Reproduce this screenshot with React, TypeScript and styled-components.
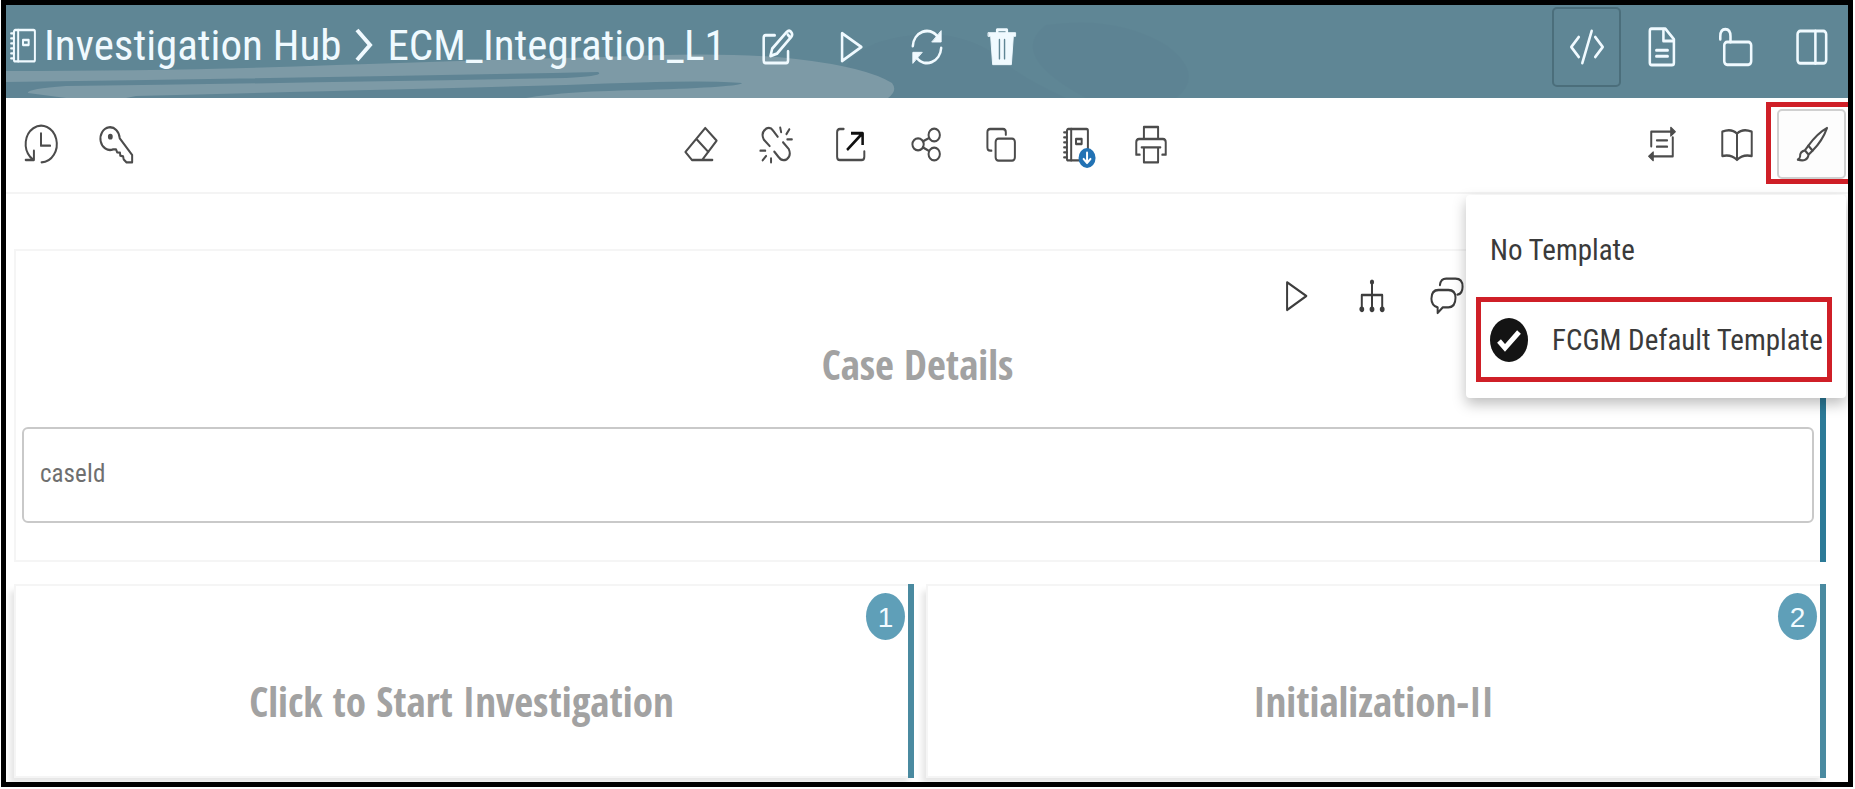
import React from "react";
import styled, { createGlobalStyle, css } from "styled-components";

const text = `"Roboto Condensed", "Open Sans", sans-serif`;
const display = `"Open Sans Condensed", "Open Sans", sans-serif`;

const GlobalStyle = createGlobalStyle`
  *, *::before, *::after { box-sizing: border-box; }
  body { margin: 0; background: #fff; font-family: ${text}; }
`;

const Page = styled.div`
  display: flex;
  min-height: 100vh;
  padding: 0 2px 2px 1px;
`;

const Frame = styled.div`
  display: flex;
  flex: 1;
  flex-direction: column;
  min-width: 0;
  border: 5px solid #000;
  background: #fff;
  overflow: hidden;
`;

const Header = styled.header`
  position: relative;
  display: flex;
  align-items: flex-start;
  justify-content: space-between;
  height: 93px;
  padding: 2px 2px 0 0;
  background: #5f8695;
  color: #f0faff;
  overflow: hidden;
`;

const Backdrop = styled.svg`
  position: absolute;
  left: 0;
  bottom: 0;
`;

const HeaderGroup = styled.div`
  position: relative;
  display: flex;
  align-items: center;
  gap: 6px;
  height: 80px;
`;

const Breadcrumb = styled.nav`
  display: flex;
  align-items: center;
  height: 80px;
  margin-right: 11px;
  padding-bottom: 4px;
  font-size: 43px;
  line-height: 56px;
  white-space: nowrap;
`;

const Crumb = styled.a`
  color: inherit;
  text-decoration: none;
`;

const Icon = styled.svg<{ $bold?: boolean }>`
  display: block;
  flex: none;
  width: 34px;
  height: 40px;
  fill: none;
  overflow: visible;
  stroke: currentColor;
  stroke-width: ${(p) => (p.$bold ? 1.8 : 1.4)};
  stroke-linecap: round;
  stroke-linejoin: round;
`;

const BrandMark = styled.span`
  margin-right: 4px;
`;

const IconButton = styled.button<{ $pressed?: "dark" | "light" }>`
  display: flex;
  align-items: center;
  justify-content: center;
  width: 69px;
  height: 80px;
  padding: 0;
  border: 2px solid transparent;
  border-radius: 5px;
  background: none;
  color: inherit;
  cursor: pointer;
  ${(p) => p.$pressed === "dark" && css`border-color: #4b6e7b;`}
  ${(p) => p.$pressed === "light" && css`height: 70px; border-color: #d0d0d0; background: #fdfdfd;`}
`;

const Toolbar = styled.div`
  position: relative;
  z-index: 1;
  display: grid;
  grid-template-columns: 1fr auto 1fr;
  align-items: center;
  height: 96px;
  padding: 0 2px 2px 0;
  border-bottom: 2px solid #f4f4f4;
  color: #4c4c4c;
`;

const ToolGroup = styled.div<{ $end?: boolean }>`
  display: flex;
  align-items: center;
  gap: 6px;
  justify-self: ${(p) => (p.$end ? "end" : "start")};
`;

const BrushHost = styled.div`
  position: relative;

  &::before {
    content: "";
    position: absolute;
    inset: -7px -2px -5px -11px;
    border: 5px solid #cf1f27;
    border-right: 0;
    pointer-events: none;
  }
`;

const Menu = styled.div`
  position: absolute;
  top: 97px;
  right: 2px;
  width: 380px;
  padding: 22px 14px 16px 10px;
  border-radius: 4px;
  background: #fff;
  box-shadow: 0 6px 14px rgba(0, 0, 0, 0.26);
`;

const MenuItem = styled.button<{ $marked?: boolean }>`
  display: flex;
  align-items: center;
  gap: 24px;
  width: 100%;
  height: ${(p) => (p.$marked ? 85 : 66)}px;
  margin-bottom: ${(p) => (p.$marked ? 0 : 14)}px;
  padding: 0 ${(p) => (p.$marked ? 0 : 14)}px 0 ${(p) => (p.$marked ? 9 : 14)}px;
  border: ${(p) => (p.$marked ? "5px solid #cf1f27" : "0")};
  background: none;
  color: #3a3a3a;
  font-family: ${text};
  font-size: 29px;
  line-height: 36px;
  white-space: nowrap;
  cursor: pointer;
`;

const CheckMark = styled.svg`
  display: block;
  flex: none;
`;

const Workspace = styled.main`
  display: flex;
  flex: 1;
  flex-direction: column;
  gap: 22px;
  padding: 55px 22px 4px 8px;
`;

const Card = styled.section<{ $accent: string; $raised?: boolean }>`
  position: relative;
  display: flex;
  flex-direction: column;
  padding-right: 7px;
  border: solid #f5f5f5;
  border-width: 2px 0 2px 2px;
  background: #fff;
  box-shadow: ${(p) => (p.$raised ? "-5px 6px 6px -1px rgba(0, 0, 0, 0.1)" : "none")};

  &::after {
    content: "";
    position: absolute;
    top: -2px;
    right: 0;
    bottom: -2px;
    width: 6px;
    background: ${(p) => p.$accent};
  }
`;

const CardTools = styled.div`
  display: flex;
  justify-content: flex-end;
  gap: 6px;
  padding: 5px 338px 0 0;
  color: #3d3d3d;
`;

const CardTitle = styled.h2`
  margin: 0;
  color: #a2a2a2;
  font-family: ${display};
  font-size: 41px;
  font-weight: 700;
  line-height: 56px;
  text-align: center;
`;

const CaseField = styled.input`
  height: 96px;
  margin: 35px 5px 37px 6px;
  padding: 0 16px 4px;
  border: 2px solid #c9c9c9;
  border-radius: 6px;
  background: #fff;
  color: #6f6f6f;
  font-family: ${text};
  font-size: 25px;
  font-weight: 400;
  line-height: 32px;
  outline: none;

  &::placeholder { color: #6f6f6f; opacity: 1; }
`;

const CardGrid = styled.div`
  display: grid;
  flex: 1;
  grid-template-columns: 1fr 1fr;
  gap: 12px;
  min-height: 193px;
`;

const StepCard = styled(Card)`
  padding-top: 87px;
`;

const StepBadge = styled.span`
  position: absolute;
  top: 7px;
  right: 9px;
  width: 39px;
  height: 47px;
  border-radius: 50%;
  background: #5f9fb8;
  color: #f2fbff;
  font-family: "Liberation Sans", sans-serif;
  font-size: 28px;
  line-height: 50px;
  text-align: center;
`;

type Glyph = { label: string; art: React.ReactNode };

const Draw = ({ children, bold }: { children: React.ReactNode; bold?: boolean }) => (
  <Icon viewBox="0 0 24 24" preserveAspectRatio="none" aria-hidden="true" $bold={bold}>
    {children}
  </Icon>
);

const notebook = (
  <>
    <rect x="5.6" y="3" width="14.8" height="18.8" rx="1" />
    <path d="M8.6 3v18.8M3.6 5h2M3.6 8h2M3.6 11h2M3.6 14h2M3.6 17h2M3.6 20h2" />
    <rect x="12" y="9" width="4" height="3" />
  </>
);

const play = <path d="M5 3.8 18.6 12 5 20.4Z" />;

const headerActions: Glyph[] = [
  {
    label: "Edit",
    art: (
      <>
        <path d="M10.4 5H4Q2.6 5 2.6 6.4V20Q2.6 21.6 4 21.6H18.4Q19.8 21.6 19.8 20V14.6" />
        <path d="M7.4 17.4 8.6 13 18.8 3Q20.6 1.4 22 3Q23.4 4.4 22 6L12 16Z" />
        <path d="M19.6 4.6 21 6" />
      </>
    ),
  },
  { label: "Run", art: play },
  {
    label: "Refresh",
    art: (
      <>
        <path d="M2 11.4A10 9.6 0 0 1 19.4 5.6M22 12.6A10 9.6 0 0 1 4.6 18.4" />
        <path d="M22 2.4V9H15.6ZM2 21.6V15.2H8.4Z" fill="currentColor" strokeWidth="0.6" />
      </>
    ),
  },
  {
    label: "Delete",
    art: (
      <>
        <path d="M8.6 4V1.6H15.4V4" />
        <path d="M2.4 3.4H21.6V5.6H20L18.6 22.6H5.4L4 5.6H2.4Z" fill="currentColor" strokeWidth="0.6" />
        <path d="M10.2 7.6V19M13.8 7.6V19" stroke="#5f8695" strokeWidth="1" />
      </>
    ),
  },
];

const headerViews: Glyph[] = [
  { label: "Code", art: <path d="M6.2 6 .9 12 6.2 18M17.8 6 23.1 12 17.8 18M15.3 2.4 8.7 21.6" /> },
  {
    label: "Document",
    art: (
      <>
        <path d="M4.6 1H14.4L20.4 7.4V21.4Q20.4 22.8 19 22.8H4.8Q3.4 22.8 3.4 21.4V2.4Q3.4 1 4.6 1Z" />
        <path d="M13 1.4V8.4H20M8 14H16M8 17.6H16" />
      </>
    ),
  },
  {
    label: "Unlock",
    art: (
      <>
        <rect x="3" y="9" width="19" height="13.6" rx="2" />
        <path d="M7.4 9V5.6Q7.4 1.4 3.8 1.4Q.2 1.4 .2 5.6V7.4" />
      </>
    ),
  },
  {
    label: "Side panel",
    art: (
      <>
        <rect x="1.8" y="2.4" width="20.2" height="19.4" rx="2" />
        <path d="M14.4 2.4V21.8" />
      </>
    ),
  },
];

const notebookTools: Glyph[] = [
  {
    label: "Versioning",
    art: (
      <>
        <path d="M12.4 23A11 11 0 1 0 4.4 19.8L6.4 21.4" />
        <path d="M12 5.6V13H18.4M1.2 21.6H7V16" />
      </>
    ),
  },
  {
    label: "Credentials",
    art: (
      <>
        <path d="M14.6 8.6A6.8 6.8 0 1 0 10 15.2L12 15.2 12.8 17 14.8 17.2 15 19 17 19.4 17.4 21.2 19.4 23H23.4V18.6Z" />
        <circle cx="8" cy="7.6" r="1" fill="currentColor" />
      </>
    ),
  },
];

const editTools: Glyph[] = [
  { label: "Clear results", art: <path d="M15 2.4 23 10 12.8 21.6H5.6L1 16.8ZM9 9.2 17.2 16.8M12.8 21.6H20" /> },
  {
    label: "Clear dependencies",
    art: (
      <path d="M7.5 13.2 3.4 9.4Q1 5.2 5 2.8Q8 1.4 10 4L13.2 7.6M17 11 21 15Q23 19 19.6 21.2Q16 22.6 14 20L10.8 16.6M15 2.2 15.6 4.8M21.4 3.2 19.4 6M23.2 9.2H20M1 16H4.4M2.6 21.8 5 19.2M8.5 20.6V23" />
    ),
  },
  {
    label: "Open externally",
    art: (
      <>
        <path d="M6.8 3H4.2Q2.2 3 2.2 5V19.6Q2.2 21.6 4.2 21.6H19.4Q21.4 21.6 21.4 19.6V16.4" />
        <path d="M9.2 15.6 20 5.6M12 5.6H20.2V12.6" stroke="#111" strokeWidth="1.8" strokeLinecap="butt" />
      </>
    ),
  },
  {
    label: "Share",
    art: (
      <>
        <ellipse cx="6.4" cy="12.2" rx="4" ry="3.6" />
        <ellipse cx="17.8" cy="6.6" rx="4" ry="3.8" />
        <ellipse cx="17.8" cy="18" rx="4" ry="3.8" />
        <path d="M9.8 10.4 14.2 8.4M9.8 14 14.2 16.2" />
      </>
    ),
  },
  {
    label: "Clone",
    art: (
      <>
        <rect x="8.2" y="8.8" width="13.6" height="13.2" rx="2" />
        <path d="M5.2 16H4.4Q2.4 16 2.4 14V5Q2.4 3 4.4 3H13.4Q15.4 3 15.4 5V6.4" />
      </>
    ),
  },
  {
    label: "Export notebook",
    art: (
      <>
        {notebook}
        <circle cx="19.8" cy="20.4" r="6" fill="#2272b4" stroke="none" />
        <path d="M19.8 17.2V23.2M17.4 21 19.8 23.4 22.2 21" stroke="#fff" />
      </>
    ),
  },
  {
    label: "Print",
    art: (
      <path d="M7 9V1.8H17V9M4 18.4H1.6V11Q1.6 9 3.6 9H20.4Q22.4 9 22.4 11V18.4H20M5.4 14H18.6M7 14V23H17V14" />
    ),
  },
];

const readTools: Glyph[] = [
  {
    label: "Reorder",
    art: (
      <>
        <path d="M4.4 13.4V4.6H18.6M19.6 8V19.4H5.4M8.4 9.8H15.6M8.4 13.6H15.6" />
        <path d="M18.2 2 21.4 4.6 18.2 7.2ZM5.8 16.8 2.6 19.4 5.8 22Z" fill="currentColor" strokeWidth="0.8" />
      </>
    ),
  },
  {
    label: "Book view",
    art: (
      <path d="M12 5.8Q8 2.4 1.6 4.6V19.2Q8 18 12 21.6Q16 18 22.4 19.2V4.6Q16 2.4 12 5.8V21.6" />
    ),
  },
];

const brush = (
  <>
    <path d="M22.6 2.4Q16 5.4 9.4 13L12.4 16Q19.4 10 22.6 2.4Z" />
    <path d="M9.4 13 7 15.8 9.6 18.4 12.4 16M7 15.8Q3.4 16.6 3.6 19.4Q3.4 20.8 2 21.4Q8.6 23 9.6 18.4" />
  </>
);

const caseTools: Glyph[] = [
  { label: "Run paragraph", art: play },
  {
    label: "Dependencies",
    art: (
      <>
        <path d="M12 3.4V20M4.8 20V11.4H19.2V20" />
        <g fill="currentColor">
          <circle cx="12" cy="3.6" r="0.8" />
          <circle cx="4.8" cy="20" r="1" />
          <circle cx="12" cy="20" r="1" />
          <circle cx="19.2" cy="20" r="1" />
        </g>
      </>
    ),
  },
  {
    label: "Comments",
    art: (
      <path d="M7 5.4Q7.6 1.6 11.4 1.6H18Q23 1.6 23 6.4Q23 10.6 19.4 11.2M6 8.4H13Q18 8.4 18 13Q18 18.6 13 18.8H9L5.4 22.2V18.8Q1 17.6 1 13.6Q1 8.4 6 8.4Z" />
    ),
  },
];

const Buttons = ({ items, pressed, bold }: { items: Glyph[]; pressed?: string; bold?: boolean }) => (
  <>
    {items.map((item) => (
      <IconButton
        key={item.label}
        type="button"
        aria-label={item.label}
        $pressed={item.label === pressed ? "dark" : undefined}
      >
        <Draw bold={bold}>{item.art}</Draw>
      </IconButton>
    ))}
  </>
);

const steps = [
  { number: 1, title: "Click to Start Investigation" },
  { number: 2, title: "Initialization-II" },
];

export default function App() {
  return (
    <Page>
      <GlobalStyle />
      <Frame>
        <Header>
          <Backdrop width="1200" height="93" viewBox="0 0 1200 93" aria-hidden="true">
            <g fill="#56788a" opacity="0.16">
              <path d="M850 93Q820 60 870 38Q940 16 990 50Q1010 70 1060 93Z" />
              <path d="M1080 93Q1000 50 1040 20Q1110 10 1160 40Q1200 70 1170 93Z" />
            </g>
            <path
              d="M0 66Q180 66 330 60Q500 54 600 52Q720 46 790 54Q860 62 886 78Q892 86 882 93H0Z"
              fill="#7d9aa6"
            />
            <path d="M0 77Q300 73 592 67Q600 71 560 73Q300 78 60 81Q20 84 22 88L60 93H0Z" fill="#5f8494" />
            <path d="M130 91Q400 84 560 80Q700 74 736 78Q735 82 640 85Q560 86 520 93H120Z" fill="#5f8494" />
          </Backdrop>
          <HeaderGroup>
            <Breadcrumb aria-label="Breadcrumb">
              <BrandMark>
                <Draw>{notebook}</Draw>
              </BrandMark>
              <Crumb href="#hub">Investigation Hub</Crumb>
              <svg width="46" height="40" viewBox="0 0 46 40" fill="none" aria-hidden="true">
                <path d="M16 5 29 20 16 35" stroke="currentColor" strokeWidth="4" />
              </svg>
              <Crumb href="#notebook">ECM_Integration_L1</Crumb>
            </Breadcrumb>
            <Buttons items={headerActions} bold />
          </HeaderGroup>
          <HeaderGroup>
            <Buttons items={headerViews} pressed="Code" bold />
          </HeaderGroup>
        </Header>

        <Toolbar>
          <ToolGroup>
            <Buttons items={notebookTools} />
          </ToolGroup>
          <ToolGroup>
            <Buttons items={editTools} />
          </ToolGroup>
          <ToolGroup $end>
            <Buttons items={readTools} />
            <BrushHost>
              <IconButton type="button" aria-label="Template" aria-expanded="true" $pressed="light">
                <Draw>{brush}</Draw>
              </IconButton>
            </BrushHost>
          </ToolGroup>
          <Menu role="menu">
            <MenuItem type="button" role="menuitem">
              No Template
            </MenuItem>
            <MenuItem type="button" role="menuitem" $marked>
              <CheckMark width="38" height="44" viewBox="0 0 38 44" aria-hidden="true">
                <ellipse cx="19" cy="22" rx="19" ry="22" fill="#141414" />
                <path d="M9 23 15 30 29 14" fill="none" stroke="#fff" strokeWidth="5" />
              </CheckMark>
              FCGM Default Template
            </MenuItem>
          </Menu>
        </Toolbar>

        <Workspace>
          <Card $accent="#2c7a97">
            <CardTools>
              <Buttons items={caseTools} />
            </CardTools>
            <CardTitle>Case Details</CardTitle>
            <CaseField aria-label="caseId" placeholder="caseId" />
          </Card>
          <CardGrid>
            {steps.map((step) => (
              <StepCard key={step.number} $accent="#4a8aa0" $raised>
                <StepBadge>{step.number}</StepBadge>
                <CardTitle>{step.title}</CardTitle>
              </StepCard>
            ))}
          </CardGrid>
        </Workspace>
      </Frame>
    </Page>
  );
}
